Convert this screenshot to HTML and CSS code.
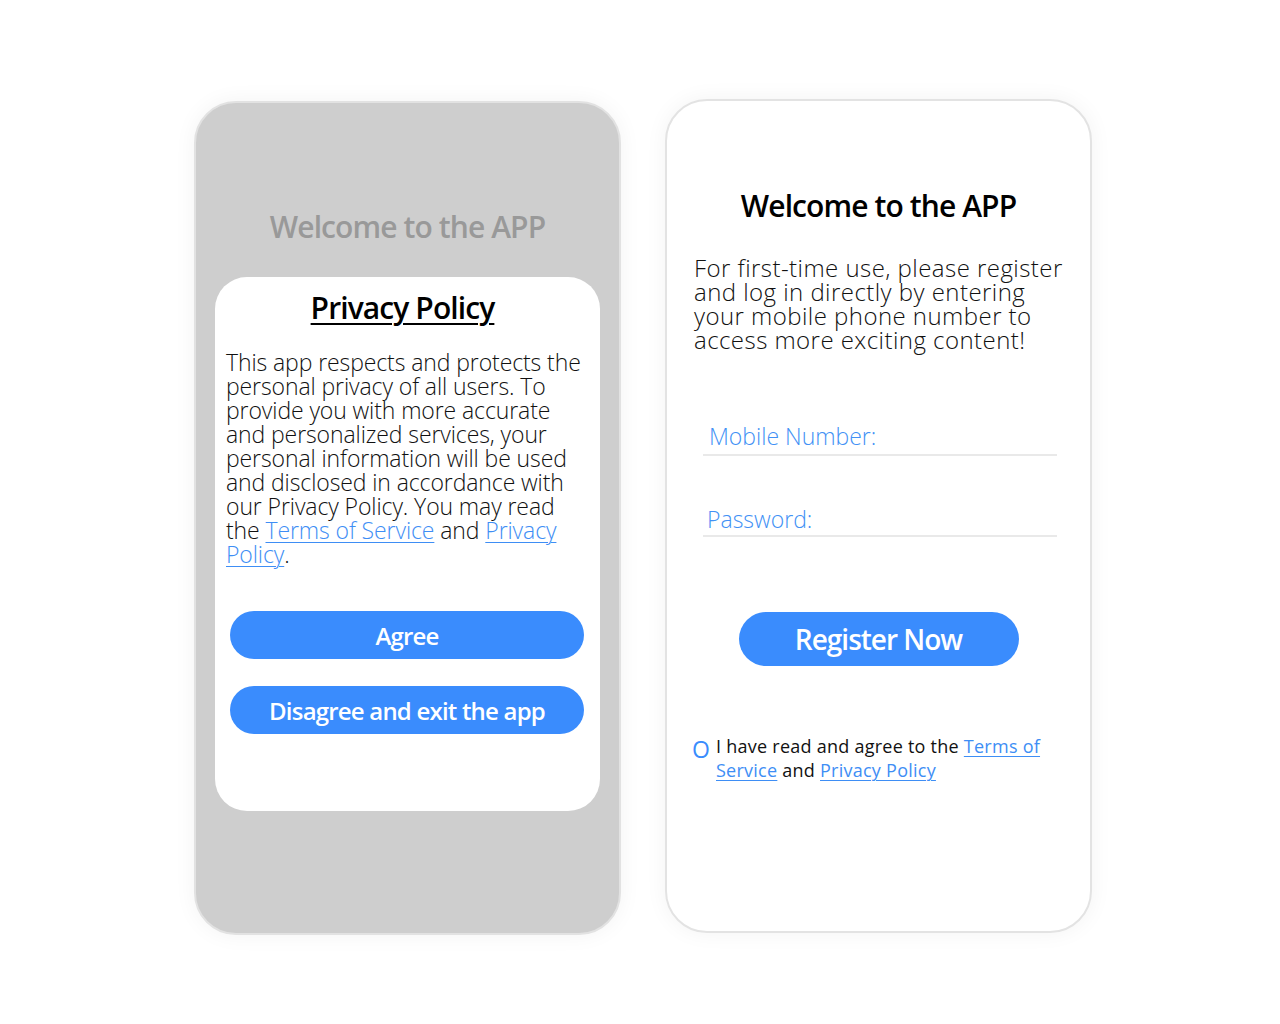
FILE: index.html
```html
<!DOCTYPE html>
<html lang="en">
<head>
<meta charset="utf-8">
<title>Welcome to the APP</title>
<link rel="stylesheet" href="styles.css">
</head>
<body>
<div class="stage">
  <section class="phone phone-dim">
    <h1 class="welcome welcome-dim">Welcome to the APP</h1>
    <div class="modal">
      <h2 class="modal-title">Privacy Policy</h2>
      <p class="modal-text">This app respects and protects the personal privacy of all users. To provide you with more accurate and personalized services, your personal information will be used and disclosed in accordance with our Privacy Policy. You may read the <a class="link" href="#">Terms of Service</a> and <a class="link" href="#">Privacy Policy</a>.</p>
      <button class="pill pill-modal pill-agree">Agree</button>
      <button class="pill pill-modal pill-disagree">Disagree and exit the app</button>
    </div>
  </section>

  <section class="phone phone-light">
    <h1 class="welcome">Welcome to the APP</h1>
    <p class="intro">For first-time use, please register and log in directly by entering your mobile phone number to access more exciting content!</p>
    <div class="field field-mobile"><span class="field-label">Mobile Number:</span></div>
    <div class="field field-pass"><span class="field-label">Password:</span></div>
    <button class="pill pill-register">Register Now</button>
    <div class="agree-row">
      <span class="check">O</span>
      <p class="agree-text">I have read and agree to the <a class="link" href="#">Terms of Service</a> and <a class="link" href="#">Privacy Policy</a></p>
    </div>
  </section>
</div>
</body>
</html>
```

FILE: styles.css
```css
* { box-sizing: border-box; }
html, body { margin: 0; padding: 0; background: #ffffff; }
body { width: 1280px; height: 1024px; overflow: hidden; font-family: "Open Sans", "Liberation Sans", sans-serif; }

.stage {
  display: flex;
  align-items: flex-start;
  gap: 44px;
  padding: 100px 0 0 194px;
}

.phone {
  width: 427px;
  height: 834px;
  border-radius: 42px;
  display: flex;
  flex-direction: column;
  box-shadow: 0 0 22px rgba(0, 0, 0, 0.05);
}
.phone-dim {
  background: #cecece;
  border: 2px solid #e2e2e2;
  align-items: stretch;
  padding: 0 19px 0 19px;
  margin-top: 1px;
}
.phone-light {
  background: #ffffff;
  border: 2px solid #e3e3e3;
  margin-top: -1px;
}

.welcome {
  margin: 85px 0 0;
  font-weight: 600;
  font-size: 30px;
  line-height: 40px;
  text-align: center;
  color: #000;
  letter-spacing: -0.9px;
}
.welcome-dim { color: #999999; margin-top: 104px; }

.modal {
  margin-top: 30px;
  height: 534px;
  background: #ffffff;
  border-radius: 32px;
  padding: 11px 15px 0 11px;
  display: flex;
  flex-direction: column;
}
.modal-title {
  margin: 0;
  font-weight: 600;
  font-size: 30px;
  line-height: 40px;
  text-align: center;
  color: #000;
  letter-spacing: -0.9px;
  text-decoration: underline;
  text-decoration-thickness: 2px;
  text-underline-offset: 4px;
  padding-right: 6px;
}
.modal-text {
  margin: 22px 0 0;
  font-weight: 300;
  font-size: 23px;
  line-height: 24px;
  color: #111;
  letter-spacing: -0.1px;
}
.link {
  color: #3e8ef5;
  text-decoration: underline;
  text-decoration-thickness: 1px;
  text-underline-offset: 3px;
}

.pill {
  border: none;
  background: #3a8cfd;
  color: #fff;
  font-family: "Open Sans", "Liberation Sans", sans-serif;
  font-weight: 600;
  padding: 0;
  cursor: pointer;
}
.pill-modal {
  margin-left: 4px;
  width: 354px;
  height: 48px;
  border-radius: 24px;
  font-size: 24px;
  letter-spacing: -0.8px;
}
.pill-agree { margin-top: 45px; }
.pill-disagree { margin-top: 27px; }

.intro {
  margin: 30px 0 0 27px;
  width: 380px;
  font-weight: 300;
  font-size: 24px;
  line-height: 24px;
  color: #111;
  letter-spacing: 0.45px;
}

.field {
  margin-left: 36px;
  width: 354px;
  border-bottom: 2px solid #e9e9e9;
}
.field-label {
  display: block;
  font-weight: 300;
  font-size: 23px;
  line-height: 30px;
  color: #4291f5;
  letter-spacing: 0px;
}
.field-mobile { margin-top: 69px; padding-bottom: 3px; padding-left: 6px; }
.field-pass { margin-top: 48px; padding-bottom: 1px; padding-left: 4px; }

.pill-register {
  align-self: center;
  margin-top: 75px;
  width: 280px;
  height: 54px;
  border-radius: 27px;
  font-size: 28px;
  letter-spacing: -1px;
}

.agree-row {
  margin: 68px 0 0 25px;
  display: flex;
  align-items: flex-start;
}
.check {
  width: 24px;
  font-size: 23px;
  line-height: 24px;
  font-weight: 500;
  color: #3a8cfd;
  padding-top: 3px;
}
.agree-text {
  margin: 0;
  width: 345px;
  font-weight: 400;
  font-size: 18px;
  line-height: 24px;
  color: #111;
  letter-spacing: 0.25px;
}
```
